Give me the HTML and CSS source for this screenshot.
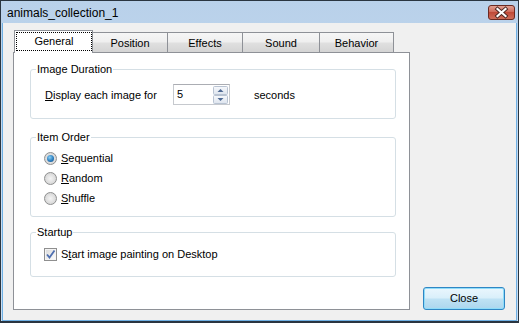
FILE: index.html
```html
<!DOCTYPE html>
<html>
<head>
<meta charset="utf-8">
<link rel="stylesheet" href="styles.css">
</head>
<body>
<div class="window">
  <div class="titlebar">
    <span class="title">animals_collection_1</span>
    <span class="xbtn">
      <svg width="27" height="15" viewBox="0 0 27 15">
        <defs>
          <linearGradient id="xg" x1="0" y1="0" x2="0" y2="1">
            <stop offset="0" stop-color="#e3a597"/>
            <stop offset="0.45" stop-color="#cf6a5a"/>
            <stop offset="0.5" stop-color="#c04a38"/>
            <stop offset="1" stop-color="#d0705c"/>
          </linearGradient>
        </defs>
        <rect x="0.5" y="0.5" width="26" height="14" rx="2.5" fill="url(#xg)" stroke="#6b2a22"/>
        <path d="M9.5 4 L17.5 11 M17.5 4 L9.5 11" stroke="#4a2520" stroke-width="4" stroke-linecap="square"/>
        <path d="M9.5 4 L17.5 11 M17.5 4 L9.5 11" stroke="#ffffff" stroke-width="2.2" stroke-linecap="square"/>
      </svg>
    </span>
  </div>
  <div class="client">
    <div class="tabctl">
      <div class="tabs">
        <div class="tab sel w79"><span class="focus">General</span></div>
        <div class="tab w76">Position</div>
        <div class="tab w76">Effects</div>
        <div class="tab w78">Sound</div>
        <div class="tab w75">Behavior</div>
      </div>
      <div class="panel">
        <fieldset class="group g1">
          <legend>Image Duration</legend>
          <div class="row">
            <span class="lbl"><u>D</u>isplay each image for</span>
            <div class="spin">
              <span class="val">5</span>
              <svg class="arrows" width="15" height="18" viewBox="0 0 15 18">
                <defs>
                  <linearGradient id="ag" x1="0" y1="0" x2="0" y2="1">
                    <stop offset="0" stop-color="#f7f9fc"/>
                    <stop offset="1" stop-color="#dde4ee"/>
                  </linearGradient>
                </defs>
                <rect x="0.5" y="0.5" width="14" height="8" rx="1" fill="url(#ag)" stroke="#b8c3d2"/>
                <rect x="0.5" y="9.5" width="14" height="8" rx="1" fill="url(#ag)" stroke="#b8c3d2"/>
                <path d="M4.5 6 L7.5 3 L10.5 6 Z" fill="#4f6a94"/>
                <path d="M4.5 12 L7.5 15 L10.5 12 Z" fill="#4f6a94"/>
              </svg>
            </div>
            <span class="unit">seconds</span>
          </div>
        </fieldset>
        <fieldset class="group g2">
          <legend>Item Order</legend>
          <div class="opt"><span class="radio on"></span><span><u>S</u>equential</span></div>
          <div class="opt"><span class="radio"></span><span><u>R</u>andom</span></div>
          <div class="opt"><span class="radio"></span><span><u>S</u>huffle</span></div>
        </fieldset>
        <fieldset class="group g3">
          <legend>Startup</legend>
          <div class="opt">
            <svg class="check" width="13" height="13" viewBox="0 0 13 13">
              <defs>
                <linearGradient id="cg" x1="0" y1="0" x2="1" y2="1">
                  <stop offset="0" stop-color="#dcdcdc"/>
                  <stop offset="1" stop-color="#fbfbfb"/>
                </linearGradient>
              </defs>
              <rect x="0.5" y="0.5" width="12" height="12" fill="#f4f4f4" stroke="#8f8f8f"/>
              <rect x="2" y="2" width="9" height="9" fill="url(#cg)"/>
              <path d="M3 6.5 L5.5 9.5 L10.5 2.5" fill="none" stroke="#4e6fb0" stroke-width="1.8"/>
            </svg>
            <span>S<u>t</u>art image painting on Desktop</span>
          </div>
        </fieldset>
      </div>
    </div>
    <div class="side">
      <button class="close">Close</button>
    </div>
  </div>
</div>
</body>
</html>
```

FILE: styles.css
```css
* { box-sizing: border-box; }
html, body { margin: 0; padding: 0; }
body {
  width: 519px;
  height: 323px;
  overflow: hidden;
  font-family: "Liberation Sans", Arial, sans-serif;
  font-size: 11px;
  color: #000;
}
.window {
  width: 519px;
  height: 323px;
  border: 1px solid #2a3540;
  border-bottom-width: 2px;
  background: linear-gradient(#b9d1ea, #c6dbf0 60%, #cadef2);
  display: flex;
  flex-direction: column;
}
.titlebar {
  height: 22px;
  display: flex;
  align-items: flex-start;
  justify-content: space-between;
  padding: 0 3px 0 6px;
}
.title {
  font-size: 12px;
  margin-top: 5px;
  color: #000;
}
.xbtn {
  display: block;
  margin-top: 4px;
  height: 15px;
}
.xbtn svg { display: block; }
.client {
  flex: 1;
  margin: 0 1px;
  border: 1px solid #6fb0e4;
  border-top: 0;
  background: #f0f0f0;
  display: flex;
  align-items: flex-end;
  padding: 7px 0 10px 10px;
}
.tabctl {
  width: 397px;
  align-self: flex-start;
}
.tabs {
  display: flex;
  align-items: flex-end;
  height: 22px;
  margin-left: 1px;
}
.tab {
  height: 20px;
  border: 1px solid #8e9197;
  border-bottom: 0;
  margin-left: -1px;
  background: linear-gradient(#f6f6f6, #efefef 45%, #dfdfdf 55%, #d4d4d4);
  display: flex;
  align-items: center;
  justify-content: center;
  padding-top: 1px;
}
.tab:first-child { margin-left: 0; }
.tab.sel {
  height: 23px;
  margin-bottom: -1px;
  background: #fff;
  position: relative;
  z-index: 1;
  padding: 1px 0 2px 1px;
  align-items: stretch;
}
.focus {
  flex: 1;
  border: 1px dotted #000;
  display: flex;
  align-items: center;
  justify-content: center;
  padding-bottom: 1px;
}
.w79 { width: 79px; }
.w76 { width: 76px; }
.w78 { width: 78px; }
.w75 { width: 75px; }
.panel {
  height: 258px;
  background: #fff;
  border: 1px solid #8e9197;
  padding: 10px 13px 0 16px;
}
.group {
  margin: 0;
  border: 1px solid #d5dfe5;
  border-radius: 3px;
  padding: 0 0 0 14px;
  min-width: 0;
}
.group legend {
  padding: 0 1px;
  margin-left: -9px;
  line-height: 13px;
  font-size: 11px;
}
.g1 { padding-top: 8px; padding-bottom: 13px; }
.g2 { margin-top: 12px; padding-top: 4px; padding-bottom: 8px; }
.g3 { margin-top: 9px; padding-top: 5px; padding-bottom: 12px; }
.row {
  display: flex;
  align-items: center;
  height: 21px;
}
.lbl { width: 128px; }
.spin {
  width: 57px;
  height: 21px;
  border: 1px solid #c6c9ce;
  border-top-color: #abadb3;
  background: #fff;
  display: flex;
  align-items: center;
  justify-content: space-between;
  padding: 0 1px 0 3px;
}
.val { padding-bottom: 1px; }
.arrows { display: block; }
.unit { margin-left: 24px; }
.opt {
  display: flex;
  align-items: center;
  height: 20px;
  gap: 3px;
}
.radio {
  width: 13px;
  height: 13px;
  border-radius: 50%;
  border: 1px solid #8e8f8f;
  background: radial-gradient(circle at 50% 50%, #f4f4f4 0, #dedede 55%, #cfcfcf 100%);
  margin-left: -1px;
  margin-right: 1px;
  display: flex;
  align-items: center;
  justify-content: center;
}
.radio.on::after {
  content: "";
  width: 7px;
  height: 7px;
  border-radius: 50%;
  background: radial-gradient(circle at 40% 35%, #8ad0f5 0, #2d7fc0 55%, #134a80 100%);
}
.check { display: block; margin-left: -1px; margin-right: 1px; }
.side {
  margin-left: 13px;
}
.close {
  display: block;
  width: 82px;
  height: 23px;
  border: 1px solid #2f86c4;
  border-radius: 3px;
  box-shadow: inset 0 0 0 1px #8fdcf9;
  background: linear-gradient(#eaf6fd, #d9effa 48%, #bfe2f4 52%, #acd6ee);
  font-family: "Liberation Sans", Arial, sans-serif;
  font-size: 11px;
  color: #000;
  padding: 0 0 1px 0;
}
```
